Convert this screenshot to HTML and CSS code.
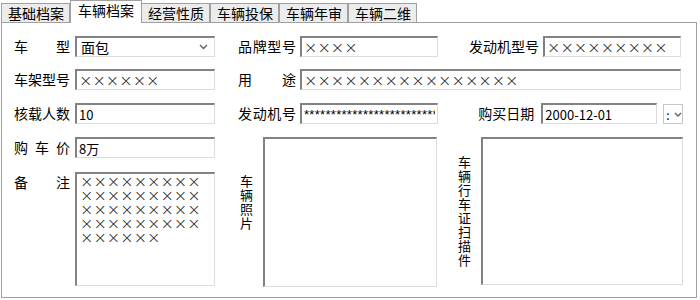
FILE: index.html
```html
<!DOCTYPE html>
<html lang="zh-CN">

<head>
    <meta charset="UTF-8">
    <title>车辆档案</title>
    <link rel="stylesheet" href="styles.css">
</head>

<body>
    <div class="tabs">
        <div class="tab">基础档案</div>
        <div class="tab tab-active">车辆档案</div>
        <div class="tab">经营性质</div>
        <div class="tab">车辆投保</div>
        <div class="tab">车辆年审</div>
        <div class="tab">车辆二维</div>
    </div>

    <div class="panel">
        <div class="form">
            <!-- 第一行 -->
            <div class="field">
                <span class="label">车型</span>
                <div class="select">
                    <span>面包</span>
                    <svg width="9" height="6" viewBox="0 0 9 6"><path d="M1 1 L4.5 4.5 L8 1" fill="none" stroke="#606060" stroke-width="1.4"/></svg>
                </div>
            </div>
            <div class="field">
                <span class="label label-mid">品牌型号</span>
                <input class="input input-mid cross" value="××××">
            </div>
            <div class="field">
                <span class="label label-right">发动机型号</span>
                <input class="input input-mid cross" value="×××××××××">
            </div>

            <!-- 第二行 -->
            <div class="field">
                <span class="label">车架型号</span>
                <input class="input cross" value="××××××">
            </div>
            <div class="field field-wide">
                <span class="label label-mid">用途</span>
                <input class="input input-wide cross" value="××××××××××××××××">
            </div>

            <!-- 第三行 -->
            <div class="field">
                <span class="label">核载人数</span>
                <input class="input" value="10">
            </div>
            <div class="field">
                <span class="label label-mid">发动机号</span>
                <input class="input input-mid stars" value="**************************************">
            </div>
            <div class="field">
                <span class="label label-right label-date">购买日期</span>
                <input class="input input-date" value="2000-12-01">
                <div class="date-btn">
                    <span>:</span>
                    <svg width="8" height="5" viewBox="0 0 8 5"><path d="M1 1 L4 4 L7 1" fill="none" stroke="#606060" stroke-width="1.4"/></svg>
                </div>
            </div>

            <!-- 第四行 -->
            <div class="field">
                <span class="label">购车价</span>
                <input class="input" value="8万">
            </div>
            <div class="field field-tall">
                <div class="vlabel vlabel-photo">车辆照片</div>
                <div class="picture picture-photo"></div>
            </div>
            <div class="field field-tall">
                <div class="vlabel vlabel-scan">车辆行车证扫描件</div>
                <div class="picture picture-scan"></div>
            </div>

            <!-- 第五行 -->
            <div class="field">
                <span class="label">备注</span>
                <textarea class="input memo cross">×××××××××
×××××××××
×××××××××
×××××××××
××××××</textarea>
            </div>
        </div>
    </div>
</body>

</html>
```

FILE: styles.css
```css
body {
    margin: 0;
    padding: 0;
    background-color: #fff;
    font-family: "Noto Sans CJK SC", "Liberation Sans", sans-serif;
    font-size: 14px;
    color: #000;
}

.tabs {
    display: flex;
    align-items: flex-end;
    height: 22px;
    padding-left: 1px;
}

.tab {
    height: 19px;
    box-sizing: border-box;
    padding: 0 5px 0 6px;
    border: 1px solid #a0a0a0;
    border-bottom: none;
    background-color: #ececec;
    line-height: 18px;
    white-space: nowrap;
}

.tab-active {
    position: relative;
    z-index: 1;
    height: 23px;
    margin-bottom: -1px;
    padding: 0 7px 0 7px;
    background-color: #fff;
    line-height: 19px;
}

.tab-active + .tab {
    margin-left: -1px;
}

.panel {
    width: 696px;
    height: 276px;
    box-sizing: border-box;
    margin-left: 1px;
    border: 1px solid #a0a0a0;
    padding: 13px 0 0 12px;
}

.form {
    display: grid;
    grid-template-columns: 224px 220px 225px;
    grid-template-rows: 33px 34px 34px 35px 115px;
}

.field {
    display: flex;
    align-items: flex-start;
}

.field-wide {
    grid-column: span 2;
}

.field-tall {
    grid-row: span 2;
}

.label {
    width: 56px;
    margin-right: 5px;
    line-height: 21px;
    text-align: justify;
    text-align-last: justify;
    white-space: nowrap;
}

.label-mid {
    width: 58px;
    margin-right: 4px;
}

.label-right {
    width: 81px;
    margin-right: 4px;
    text-align: right;
    text-align-last: right;
}

.label-date {
    width: 78px;
    margin-right: 7px;
}

.input {
    width: 140px;
    height: 21px;
    box-sizing: border-box;
    margin: 0;
    padding: 0 2px;
    border-style: solid;
    border-width: 2px 1px 1px 2px;
    border-color: #828282 #dcdcdc #dcdcdc #828282;
    background: #fff;
    font-family: "Noto Sans CJK SC", "Liberation Sans", sans-serif;
    font-size: 13px;
    color: #000;
    outline: none;
}

.input-mid {
    width: 138px;
}

.input-wide {
    width: 381px;
}

.input-date {
    width: 116px;
}

.cross {
    font-family: "DejaVu Sans", sans-serif;
    font-size: 16px;
    font-weight: 200;
    color: #222;
}

.stars {
    font-family: "Liberation Sans", sans-serif;
    font-size: 13px;
    letter-spacing: 0.3px;
}

.select {
    display: flex;
    align-items: center;
    justify-content: space-between;
    width: 140px;
    height: 21px;
    box-sizing: border-box;
    padding: 0 6px 0 4px;
    border-style: solid;
    border-width: 2px 1px 1px 2px;
    border-color: #828282 #dcdcdc #dcdcdc #828282;
}

.date-btn {
    display: flex;
    align-items: center;
    gap: 4px;
    width: 20px;
    height: 20px;
    box-sizing: border-box;
    margin: 1px 0 0 6px;
    padding-left: 2px;
    border: 1px solid #c8c8c8;
    font-size: 12px;
}

.memo {
    height: 114px;
    padding: 1px 3px;
    resize: none;
    overflow: hidden;
    line-height: 14px;
}

.vlabel {
    width: 13px;
    font-size: 13px;
    line-height: 14px;
}

.vlabel-photo {
    margin: 0 10px 0 2px;
    padding-top: 37px;
}

.vlabel-scan {
    margin-right: 10px;
    padding-top: 18px;
}

.picture {
    box-sizing: border-box;
    border-style: solid;
    border-width: 2px 1px 1px 2px;
    border-color: #828282 #dcdcdc #dcdcdc #828282;
}

.picture-photo {
    width: 174px;
    height: 150px;
}

.picture-scan {
    width: 202px;
    height: 148px;
}
```
